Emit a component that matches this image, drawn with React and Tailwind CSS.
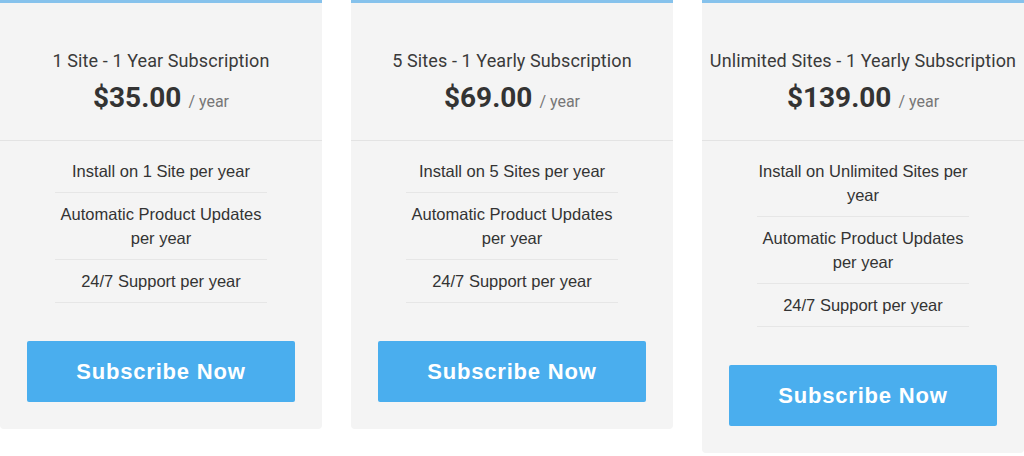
import React from 'react';

const plans = [
  {
    title: '1 Site - 1 Year Subscription',
    price: '$35.00',
    features: ['Install on 1 Site per year', 'Automatic Product Updates per year', '24/7 Support per year'],
  },
  {
    title: '5 Sites - 1 Yearly Subscription',
    price: '$69.00',
    features: ['Install on 5 Sites per year', 'Automatic Product Updates per year', '24/7 Support per year'],
  },
  {
    title: 'Unlimited Sites - 1 Yearly Subscription',
    price: '$139.00',
    features: ['Install on Unlimited Sites per year', 'Automatic Product Updates per year', '24/7 Support per year'],
  },
];

const PlanCard = ({ plan }) => (
  <div className="w-[322px] bg-[#f4f4f4] border-t-[3px] border-[#86c2ec] rounded-b-[4px] flex flex-col">
    <div className="pt-[45px] pb-[20px] border-b border-[#e3e3e3] text-center text-[#333] font-['Roboto',sans-serif]">
      <h3 className="text-[18px] leading-[26px] tracking-[0.1px] text-[#3a3a3a]">{plan.title}</h3>
      <div className="mt-[6px] leading-[36px]">
        <span className="text-[28px] font-bold">{plan.price}</span>
        <span className="ml-[7px] text-[16px] text-[#777]">/ year</span>
      </div>
    </div>
    <ul className="mx-auto w-[212px] pt-[9px] font-['Liberation_Sans',Arial,sans-serif] text-[16.5px] leading-[24px] text-[#333] text-center">
      {plan.features.map((f) => (
        <li key={f} className="py-[9px] border-b border-[#e6e6e6]">
          {f}
        </li>
      ))}
    </ul>
    <div className="px-[27px] pt-[38px] pb-[27px]">
      <button className="w-full h-[61px] bg-[#4aaeee] rounded-[2px] text-white font-['Liberation_Sans',Arial,sans-serif] font-bold text-[22px] tracking-[0.8px]">
        Subscribe Now
      </button>
    </div>
  </div>
);

const App = () => (
  <div className="w-[1024px] h-[456px] bg-white flex items-start gap-[29px] overflow-hidden">
    {plans.map((p) => (
      <PlanCard key={p.title} plan={p} />
    ))}
  </div>
);

export default App;
